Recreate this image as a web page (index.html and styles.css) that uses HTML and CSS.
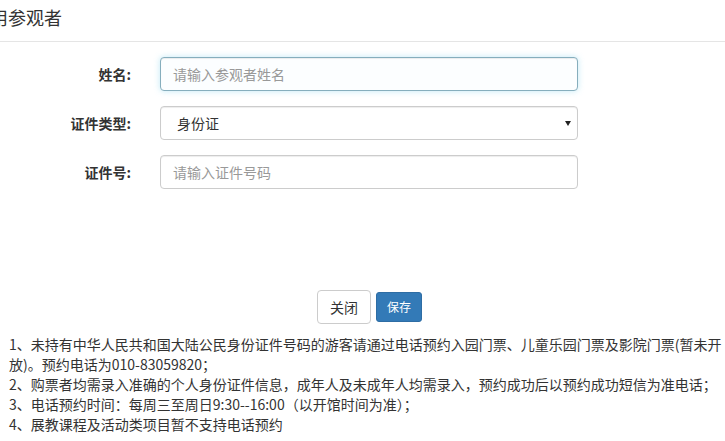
FILE: index.html
```html
<!DOCTYPE html>
<html lang="zh-CN">
<head>
<meta charset="utf-8">
<title>常用参观者</title>
<link rel="stylesheet" href="styles.css">
</head>
<body>
<div class="modal">
  <div class="modal-header">
    <h4 class="modal-title">常用参观者</h4>
  </div>
  <div class="modal-body">
    <form class="form">
      <div class="form-row">
        <label class="form-label">姓名:</label>
        <div class="form-control focused"><span class="placeholder">请输入参观者姓名</span></div>
      </div>
      <div class="form-row">
        <label class="form-label">证件类型:</label>
        <div class="form-control select"><span class="select-value">身份证</span><span class="caret"></span></div>
      </div>
      <div class="form-row">
        <label class="form-label">证件号:</label>
        <div class="form-control"><span class="placeholder">请输入证件号码</span></div>
      </div>
    </form>
    <div class="actions">
      <button class="btn btn-default" type="button">关闭</button>
      <button class="btn btn-primary" type="button">保存</button>
    </div>
    <div class="notes">
      <p>1、未持有中华人民共和国大陆公民身份证件号码的游客请通过电话预约入园门票、儿童乐园门票及影院门票(暂未开放)。预约电话为010-83059820；</p>
      <p>2、购票者均需录入准确的个人身份证件信息，成年人及未成年人均需录入，预约成功后以预约成功短信为准电话；</p>
      <p>3、电话预约时间：每周三至周日9:30--16:00（以开馆时间为准）；</p>
      <p>4、展教课程及活动类项目暂不支持电话预约</p>
    </div>
  </div>
</div>
</body>
</html>
```

FILE: styles.css
```css
html, body {
  margin: 0;
  padding: 0;
  background: #fff;
}
body {
  width: 725px;
  height: 441px;
  overflow: hidden;
  font-family: "Noto Sans CJK SC", "Microsoft YaHei", "Noto Sans", sans-serif;
  font-size: 14px;
  line-height: 20px;
  color: #333;
}
.modal {
  width: 725px;
}
.modal-header {
  padding: 4px 15px 11px 0;
  border-bottom: 1px solid #e5e5e5;
}
.modal-title {
  margin: 0 0 0 -28px;
  font-size: 18px;
  line-height: 26px;
  font-weight: normal;
  color: #333;
  white-space: nowrap;
}
.modal-body {
  padding: 15px 0 0 0;
}
.form {
  margin: 0;
}
.form-row {
  display: flex;
  align-items: center;
  margin-bottom: 15px;
}
.form-label {
  width: 131px;
  text-align: right;
  font-weight: bold;
  margin-right: 29px;
  white-space: nowrap;
}
.form-control {
  box-sizing: border-box;
  width: 418px;
  height: 34px;
  padding: 6px 12px;
  border: 1px solid #ccc;
  border-radius: 4px;
  box-shadow: inset 0 1px 1px rgba(0,0,0,.075);
  display: flex;
  align-items: center;
  background: #fff;
}
.form-control.focused {
  border-color: #86aebd;
  box-shadow: inset 0 1px 1px rgba(0,0,0,.075), 0 0 6px rgba(102,200,233,.4);
  background: #fcfeff;
}
.placeholder {
  color: #999;
}
.select {
  padding-left: 16px;
  padding-right: 6px;
}
.select-value {
  color: #333;
}
.caret {
  margin-left: auto;
  width: 0;
  height: 0;
  border-left: 3.5px solid transparent;
  border-right: 3.5px solid transparent;
  border-top: 5px solid #222;
}
.actions {
  display: flex;
  justify-content: center;
  align-items: center;
  gap: 5px;
  margin-top: 101px;
  padding-left: 14px;
}
.btn {
  font-family: inherit;
  cursor: pointer;
  box-sizing: border-box;
  border: 1px solid transparent;
}
.btn-default {
  font-size: 14px;
  line-height: 20px;
  padding: 6px 12px;
  border-color: #ccc;
  border-radius: 4px;
  background: #fff;
  color: #333;
}
.btn-primary {
  font-size: 12px;
  line-height: 18px;
  padding: 5px 10px;
  border-color: #2e6da4;
  border-radius: 3px;
  background: #337ab7;
  color: #fff;
}
.notes {
  margin-top: 10px;
  padding-left: 9px;
}
.notes p {
  margin: 0;
  font-size: 14px;
  line-height: 20px;
  color: #333;
}
```
